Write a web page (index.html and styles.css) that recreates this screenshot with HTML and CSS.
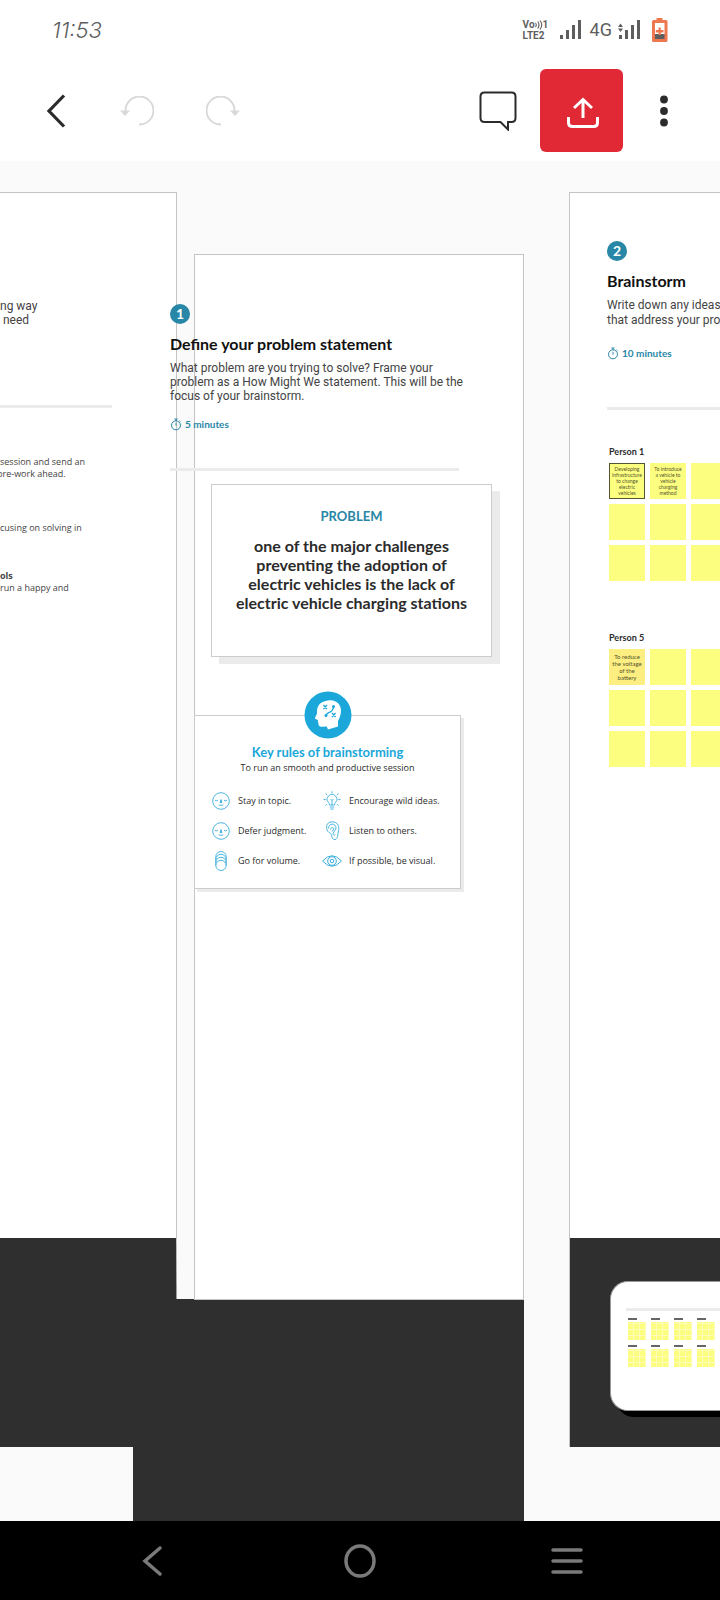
FILE: index.html
```html
<!DOCTYPE html>
<html lang="en">
<head>
<meta charset="utf-8">
<meta name="viewport" content="width=device-width, initial-scale=1">
<title>Brainstorm board</title>
<link rel="stylesheet" href="styles.css">
</head>
<body>
<svg class="defs" width="0" height="0" aria-hidden="true">
  <symbol id="timer" viewBox="0 0 12 13"><g fill="none" stroke="currentColor" stroke-width="1"><circle cx="6" cy="7.3" r="4.5"/><path d="M4.5 1h3M6 1v2M6 4.8v2.8M9.6 2.8l.9.9"/></g></symbol>
  <symbol id="face" viewBox="0 0 20 20"><g fill="none" stroke="currentColor" stroke-width=".9"><circle cx="10" cy="10" r="8.3"/><path d="M4 9.200q1.500 1.200 3 0M13 9.200q1.500 1.200 3 0M7.700 13.900q2.300.9 4.600 0"/><path d="M10 8.600l-.9 3h1.800z" fill="currentColor"/></g></symbol>
</svg>
<header class="top">
  <div class="status">
    <time class="clock">11:53</time>
    <div class="signals">
      <div class="volte">
        <span class="volte-line">Vo<svg width="8" height="10" viewBox="0 0 8 10"><path d="M.5 3q1.500 2 0 4M2.700 1.500q2.600 3.500 0 7M5 .5q3.500 4.500 0 9" fill="none" stroke="currentColor" stroke-width="1.100"/></svg>1</span>
        <span class="volte-line">LTE2</span>
      </div>
      <svg class="bars" width="22" height="20" viewBox="0 0 22 20"><path d="M0 15h3v4H0zM6 10h3v9H6zM12 5h3v14h-3zM18 0h3v19h-3z" fill="currentColor"/></svg>
      <span class="net">4G</span>
      <svg class="bars2" width="22" height="20" viewBox="0 0 22 20"><path d="M1 15h3v4H1zM7 10h3v9H7zM13 5h3v14h-3zM19 0h3v19h-3zM0 7l2.500-3.500L5 7zM0 8.500h5L2.500 12z" fill="currentColor"/></svg>
      <svg class="battery" width="16" height="24" viewBox="0 0 16 24"><path d="M4.500 0h6v2H14q1.500 0 1.500 1.500v19Q15.500 24 14 24H1.500Q0 24 0 22.500v-19Q0 2 1.500 2h3z" fill="#ee774f"/><path d="M3 5h9.500v11H3z" fill="#fff"/><path d="M3 16h9.500v5H3z" fill="#5e5e5e"/><path d="M6.500 9.500h2.300v2.600h2.700v2.300H8.800V17H6.500v-2.600H3.800v-2.300h2.700z" fill="#ee774f"/></svg>
    </div>
  </div>
  <nav class="toolbar" aria-label="Board tools">
    <button class="tool" aria-label="Back"><svg width="20" height="34" viewBox="0 0 20 34"><path d="M18 1.500L3 17l15 15.500" fill="none" stroke="#2b2b2b" stroke-width="3.200"/></svg></button>
    <button class="tool undo" aria-label="Undo"><svg width="34" height="30" viewBox="0 0 34 30"><path d="M5.500 15A14 14 0 1 1 19 28.500" fill="none" stroke="#d9d9d9" stroke-width="2"/><path d="M0 14.500h10L5 20z" fill="#d9d9d9"/></svg></button>
    <button class="tool redo" aria-label="Redo"><svg width="34" height="30" viewBox="0 0 34 30"><path d="M28.500 15A14 14 0 1 0 15 28.500" fill="none" stroke="#d9d9d9" stroke-width="2"/><path d="M24 14.500h10L29 20z" fill="#d9d9d9"/></svg></button>
    <button class="tool comment" aria-label="Comments"><svg width="38" height="40" viewBox="0 0 38 40"><path d="M5.500 1.500h27q4 0 4 4v21.500q0 4-4 4H29v7.500L21.500 31h-16q-4 0-4-4V5.500q0-4 4-4z" fill="none" stroke="#2b2b2b" stroke-width="2"/></svg></button>
    <button class="tool share" aria-label="Share"><svg width="32" height="32" viewBox="0 0 32 32"><path d="M1.500 20v5.500q0 4 4 4h21q4 0 4-4V20M16 21V2.500M7 11l9-8.500 9 8.500" fill="none" stroke="#fff" stroke-width="3"/></svg></button>
    <button class="tool more" aria-label="More"><svg width="8" height="32" viewBox="0 0 8 32" fill="#2b2b2b"><circle cx="4" cy="4.500" r="3.900"/><circle cx="4" cy="16" r="3.900"/><circle cx="4" cy="27.500" r="3.900"/></svg></button>
  </nav>
</header>

<main class="canvas">
  <section class="frame frame-prep"></section>
  <div class="node prep">
    <p class="body lead">ng way<br>&nbsp;need</p>
    <hr class="rule">
    <p class="small">session and send an</p>
    <p class="small cut">pre-work ahead.</p>
    <p class="small focus">cusing on solving in</p>
    <h3 class="small strong">ols</h3>
    <p class="small">run a happy and</p>
  </div>

  <div class="node dark-strip"></div>
  <section class="frame frame-define"></section>

  <div class="node step step-define">
    <span class="badge">1</span>
    <h2 class="title">Define your problem statement</h2>
    <p class="body">What problem are you trying to solve? Frame your<br>problem as a How Might We statement. This will be the<br>focus of your brainstorm.</p>
    <p class="timer"><svg width="12" height="13"><use href="#timer"/></svg>5 minutes</p>
    <hr class="rule">
  </div>

  <article class="node problem">
    <h3 class="problem-label">PROBLEM</h3>
    <p class="problem-text">one of the major challenges<br>preventing the adoption of<br>electric vehicles is the lack of<br>electric vehicle charging stations</p>
  </article>

  <article class="node rules">
    <svg class="head" width="48" height="48" viewBox="0 0 48 48"><circle cx="24" cy="24" r="23.500" fill="#1ba7da"/><path d="M24 9.500c8-1.500 13.500 4 13 11-.3 4.500-2 7.500-3 9.500v5.500l-10 3-1.500-3.200c-3 .8-7 .9-7.800-1l-.9-5.300-3-1.500 2.200-5C12.500 15 16 10.500 24 9.500z" fill="#fff"/><path d="M19.500 14l3.500 4M23 14l-3.500 4M28 22l3.500 4M31.500 22l-3.500 4M22 25c.5-5 7-2 7.500-9" fill="none" stroke="#1ba7da" stroke-width="1.300"/><circle cx="29.500" cy="15.500" r="1.500" fill="#1ba7da"/><circle cx="22" cy="24.500" r="1.500" fill="#1ba7da"/></svg>
    <h3 class="rules-title">Key rules of brainstorming</h3>
    <p class="small rules-sub">To run an smooth and productive session</p>
    <ul class="rules-list">
      <li class="small"><svg width="20" height="20"><use href="#face"/></svg>Stay in topic.</li>
      <li class="small"><svg width="20" height="20" viewBox="0 0 20 20"><g fill="none" stroke="currentColor" stroke-width=".9"><path d="M7.500 14q0-1.500-1.200-2.700a4.800 4.800 0 1 1 7.400 0Q12.500 12.500 12.500 14zM7.800 16h4.400M8.300 18h3.400M8.500 8l1.500 1.500L11.500 8M10 9.500V14M10 .3v2M1.500 8.500h2.200M16.300 8.500h2.200M3.500 2.500l1.600 1.600M16.500 2.500l-1.600 1.600M3.500 14.500l1.400-1.300M16.500 14.500l-1.400-1.300"/></g></svg>Encourage wild ideas.</li>
      <li class="small"><svg width="20" height="20"><use href="#face"/></svg>Defer judgment.</li>
      <li class="small"><svg width="20" height="20" viewBox="0 0 20 20"><g fill="none" stroke="currentColor" stroke-width=".9"><path d="M6 10.500C3.500 7 4 1 10 .8c6 0 7.500 5 6.500 9-.8 3-.5 8.500-3.500 8.800-3.500 0-3-3.500-3.800-5.300C8.500 11.700 7 12 6 10.500z"/><path d="M6.500 7.500C6.500 1.500 14 2 14 7c0 3-2.500 3-2.800 5.500-.2 1.700 1.300 2.500 2 1M8 8.500q3-3.500 4-.5.200 1.200-2.200 2.300"/></g></svg>Listen to others.</li>
      <li class="small"><svg width="20" height="20" viewBox="0 0 20 20"><g fill="none" stroke="currentColor" stroke-width=".9"><rect x="4.800" y=".5" width="10.400" height="19" rx="5.200"/><path d="M4.800 8.500a5.200 5.200 0 0 1 10.400 0M4.800 11.500a5.200 5.200 0 0 1 10.400 0M4.800 14.500a5.200 5.200 0 0 1 10.400 0"/></g></svg>Go for volume.</li>
      <li class="small"><svg width="20" height="20" viewBox="0 0 20 20"><g fill="none" stroke="currentColor" stroke-width="1"><path d="M.5 10Q10-.5 19.500 10 10 20.500.5 10z"/><circle cx="10" cy="10" r="4.300"/><circle cx="10" cy="10" r="1.800"/></g></svg>If possible, be visual.</li>
    </ul>
  </article>

  <section class="frame frame-brainstorm">
    <div class="frame-base">
      <div class="preview">
        <hr class="rule">
        <div class="mini-row"><i class="mini"></i><i class="mini"></i><i class="mini"></i><i class="mini"></i></div>
        <div class="mini-row late"><i class="mini"></i><i class="mini"></i><i class="mini"></i><i class="mini"></i></div>
      </div>
    </div>
  </section>
  <div class="node step step-brainstorm">
    <span class="badge">2</span>
    <h2 class="title">Brainstorm</h2>
    <p class="body">Write down any ideas<br>that address your problem</p>
    <p class="timer"><svg width="12" height="13"><use href="#timer"/></svg>10 minutes</p>
    <hr class="rule">
  </div>
  <div class="node person person-1">
    <h4 class="person-name">Person 1</h4>
    <div class="notes">
      <div class="note picked">Developing<br>infrastructure<br>to change<br>electric<br>vehicles</div><div class="note">To introduce<br>a vehicle to<br>vehicle<br>charging<br>method</div><div class="note"></div>
      <div class="note"></div><div class="note"></div><div class="note"></div>
      <div class="note"></div><div class="note"></div><div class="note"></div>
    </div>
  </div>
  <div class="node person person-5">
    <h4 class="person-name">Person 5</h4>
    <div class="notes">
      <div class="note warm">To reduce<br>the voltage<br>of the<br>battery</div><div class="note"></div><div class="note"></div>
      <div class="note"></div><div class="note"></div><div class="note"></div>
      <div class="note"></div><div class="note"></div><div class="note"></div>
    </div>
  </div>
</main>

<nav class="system" aria-label="System">
  <button class="sys" aria-label="Back"><svg width="34" height="34" viewBox="0 0 34 34"><path d="M24 4L9 17l15 13" fill="none" stroke="#7a7a7a" stroke-width="3.500" stroke-linecap="round"/></svg></button>
  <button class="sys" aria-label="Home"><svg width="34" height="34" viewBox="0 0 34 34"><ellipse cx="17" cy="17" rx="14" ry="15" fill="none" stroke="#7a7a7a" stroke-width="3.500"/></svg></button>
  <button class="sys" aria-label="Recent"><svg width="34" height="34" viewBox="0 0 34 34"><path d="M3 6h28M3 17h28M3 28h28" fill="none" stroke="#7a7a7a" stroke-width="3.500" stroke-linecap="round"/></svg></button>
</nav>
</body>
</html>
```
FILE: styles.css
```css
* { box-sizing: border-box; }
body {
  margin: 0;
  min-height: 100vh;
  display: flex;
  flex-direction: column;
  background: #fff;
  color: #2b2b2b;
  font-family: Lato, "Open Sans", sans-serif;
}
h2, h3, h4, p, ul { margin: 0; padding: 0; }
button { border: 0; padding: 0; background: none; display: grid; place-items: center; }
svg { display: block; flex: none; }
.defs { position: absolute; }

.status {
  height: 60px;
  padding: 0 52px;
  display: flex;
  align-items: center;
  justify-content: space-between;
  color: #5e5e5e;
}
.clock { font: italic 300 22px/24px Inter, sans-serif; }
.signals { display: flex; align-items: center; }
.volte { width: 25px; font: 700 10px/11px Roboto, sans-serif; }
.volte-line { display: flex; align-items: center; }
.bars { margin-left: 12px; }
.net { margin-left: 8px; font: 18px/24px Roboto, sans-serif; }
.bars2 { margin-left: 6px; }
.battery { margin-left: 12px; }

.toolbar {
  height: 101px;
  padding: 0 36px;
  display: flex;
  align-items: center;
}
.tool { width: 40px; height: 48px; }
.undo { margin-left: 41px; }
.redo { margin-left: 46px; }
.comment { margin-left: auto; }
.share { width: 83px; height: 83px; margin: 0 21px 0 22px; padding: 4px 0 0 3px; border-radius: 6px; background: #e02935; }

.canvas { position: relative; flex: 1; min-height: 600px; overflow: hidden; background: #fafafa; }
.node, .frame { position: absolute; }
.frame { background: #fff; border: 1px solid #c4c4c4; display: flex; flex-direction: column; justify-content: flex-end; }
.frame-prep { left: -1px; top: 31px; width: 178px; height: 1255px; border-bottom: 209px solid #2f2f2f; }
.frame-define { left: 194px; top: 93px; width: 330px; height: 1046px; }
.dark-strip { left: 133px; top: 1138px; bottom: 0; width: 391px; background: #2f2f2f; }
.frame-brainstorm { left: 569px; right: -1px; top: 31px; height: 1255px; border-bottom: 0; }
.frame-base { height: 209px; padding: 43px 0 36px 40px; background: #2f2f2f; overflow: hidden; }
.preview {
  height: 130px;
  padding: 26px 0 0 15px;
  background: #fff;
  border: 1px solid #999;
  border-right: 0;
  border-radius: 18px 0 0 18px;
  box-shadow: 6px 6px 0 #000;
}
.rule { border: 0; margin: 0; height: 3px; background: #ebebeb; }
.mini-row { display: flex; gap: 5px; margin: 7px 0 0 2px; }
.mini {
  flex: none;
  width: 18px;
  height: 22px;
  background:
    linear-gradient(#666, #666) 0 0 / 9px 2px no-repeat,
    linear-gradient(#fff, #fff) 0 0 / 100% 4px no-repeat,
    repeating-linear-gradient(90deg, transparent 0 5px, #fdfdb8 5px 6px),
    repeating-linear-gradient(#fcfe80 0 5px, #fdfdb8 5px 6px);
}
.late { margin-top: 5px; }

.step { color: #444; }
.step-define { left: 170px; top: 143px; width: 289px; }
.step-brainstorm { left: 607px; top: 80px; right: 0; }
.badge {
  width: 20px;
  height: 20px;
  display: grid;
  place-items: center;
  border-radius: 50%;
  background: #2886a6;
  color: #fff;
  font: 700 14px/20px Lato, sans-serif;
}
.title { margin: 10px 0 7px; font-size: 16px; line-height: 20px; color: #111; white-space: nowrap; }
.body { font: 12px/14px Roboto, sans-serif; white-space: nowrap; }
.timer { display: flex; align-items: center; gap: 3px; margin: 14px 0 37px; font-size: 10px; font-weight: 700; line-height: 14px; color: #2886a6; }
.step-brainstorm .timer { margin: 18px 0 47px; }
.step-brainstorm .body { line-height: 15px; }
.small { font: 9px/12px "Open Sans", sans-serif; white-space: nowrap; }
.strong { font-weight: 700; }

.prep { left: 0; top: 138px; width: 112px; color: #444; }
.lead { margin-bottom: 78px; }
.prep .rule { margin-bottom: 48px; }
.cut { margin-left: -3px; }
.focus { margin: 42px 0 36px; }

.problem {
  left: 211px;
  top: 323px;
  width: 281px;
  height: 173px;
  padding-top: 22px;
  background: #fff;
  border: 1px solid #ccc;
  box-shadow: 8px 7px 0 #ebebeb;
  text-align: center;
}
.problem-label { font-size: 13px; line-height: 18px; color: #2886a6; }
.problem-text { margin-top: 11px; font-size: 16px; line-height: 19px; font-weight: 700; }

.rules {
  left: 194px;
  top: 554px;
  width: 267px;
  height: 174px;
  background: #fff;
  border: 1px solid #ccc;
  box-shadow: 3px 3px 0 #ebebeb;
  display: flex;
  flex-direction: column;
  align-items: center;
}
.head { margin-top: -25px; }
.rules-title { margin-top: 4px; font-size: 13px; line-height: 18px; color: #1ba7da; }
.rules-sub { margin-top: 1px; }
.rules-list { align-self: stretch; display: grid; grid-template-columns: 111px 1fr; row-gap: 10px; margin-top: 17px; padding-left: 16px; list-style: none; }
.rules-list li { display: flex; align-items: center; gap: 7px; }
.rules-list svg { color: #3aaedb; }

.person { left: 609px; }
.person-1 { top: 282px; }
.person-5 { top: 468px; }
.person-name { font-size: 9px; line-height: 18px; }
.notes { display: grid; grid-template-columns: repeat(3, 36px); grid-auto-rows: 36px; gap: 5px; margin-top: 2px; }
.note { padding: 3px 0; background: #fcfe80; color: #555530; font-size: 5px; line-height: 6px; text-align: center; white-space: nowrap; }
.picked { border: 1px solid #555530; padding: 2px 0; }
.warm { padding: 4px 0; background: #fcee80; font-size: 6px; line-height: 7px; }

.system { height: 79px; padding: 0 136px; background: #000; display: flex; align-items: center; justify-content: space-between; }
```
